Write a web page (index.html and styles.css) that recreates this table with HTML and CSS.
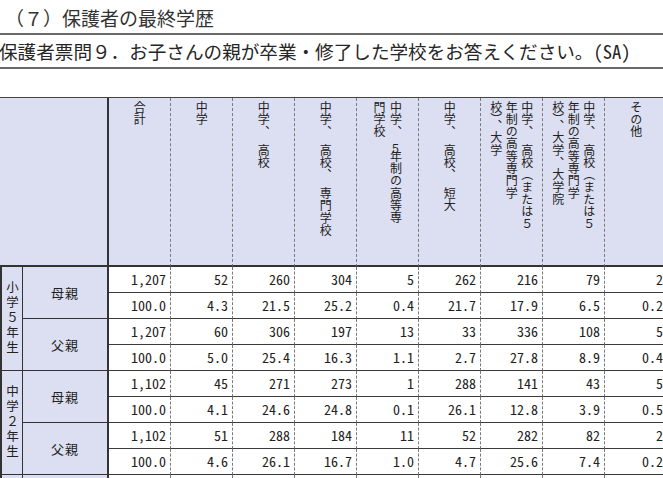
FILE: index.html
```html
<!DOCTYPE html>
<html lang="ja">
<head>
<meta charset="utf-8">
<title>保護者の最終学歴</title>
<link rel="stylesheet" href="styles.css">
</head>
<body>
<div class="title">（７）保護者の最終学歴</div>
<div class="question">保護者票問９．お子さんの親が卒業・修了した学校をお答えください。<span class="ascii">(SA)</span></div>
<div class="tbl">
  <div class="h corner"></div>
  <div class="h"><div class="vt">合計</div></div>
  <div class="h"><div class="vt">中学</div></div>
  <div class="h"><div class="vt">中学、　高校</div></div>
  <div class="h"><div class="vt">中学、　高校、　専門学校</div></div>
  <div class="h"><div class="vt">中学、　<span class="hw">５</span>年制の高等専<br>門学校</div></div>
  <div class="h"><div class="vt">中学、　高校、　短大</div></div>
  <div class="h"><div class="vt">中学、　高校（または５<br>年制の高等専門学<br>校）、大学</div></div>
  <div class="h"><div class="vt">中学、　高校（または５<br>年制の高等専門学<br>校）、大学、大学院</div></div>
  <div class="h last"><div class="vt">その他</div></div>

  <div class="grp"><div class="vg">小学５年生</div></div>
  <div class="lbl">母親</div>
  <div class="c">1,207</div><div class="c">52</div><div class="c">260</div><div class="c">304</div><div class="c">5</div><div class="c">262</div><div class="c">216</div><div class="c">79</div><div class="c last">2</div>
  <div class="c">100.0</div><div class="c">4.3</div><div class="c">21.5</div><div class="c">25.2</div><div class="c">0.4</div><div class="c">21.7</div><div class="c">17.9</div><div class="c">6.5</div><div class="c last">0.2</div>
  <div class="lbl">父親</div>
  <div class="c">1,207</div><div class="c">60</div><div class="c">306</div><div class="c">197</div><div class="c">13</div><div class="c">33</div><div class="c">336</div><div class="c">108</div><div class="c last">5</div>
  <div class="c">100.0</div><div class="c">5.0</div><div class="c">25.4</div><div class="c">16.3</div><div class="c">1.1</div><div class="c">2.7</div><div class="c">27.8</div><div class="c">8.9</div><div class="c last">0.4</div>

  <div class="grp"><div class="vg">中学２年生</div></div>
  <div class="lbl">母親</div>
  <div class="c">1,102</div><div class="c">45</div><div class="c">271</div><div class="c">273</div><div class="c">1</div><div class="c">288</div><div class="c">141</div><div class="c">43</div><div class="c last">5</div>
  <div class="c">100.0</div><div class="c">4.1</div><div class="c">24.6</div><div class="c">24.8</div><div class="c">0.1</div><div class="c">26.1</div><div class="c">12.8</div><div class="c">3.9</div><div class="c last">0.5</div>
  <div class="lbl">父親</div>
  <div class="c">1,102</div><div class="c">51</div><div class="c">288</div><div class="c">184</div><div class="c">11</div><div class="c">52</div><div class="c">282</div><div class="c">82</div><div class="c last">2</div>
  <div class="c">100.0</div><div class="c">4.6</div><div class="c">26.1</div><div class="c">16.7</div><div class="c">1.0</div><div class="c">4.7</div><div class="c">25.6</div><div class="c">7.4</div><div class="c last">0.2</div>

  <div class="grp"></div>
  <div class="lbl"></div>
  <div class="c"></div><div class="c"></div><div class="c"></div><div class="c"></div><div class="c"></div><div class="c"></div><div class="c"></div><div class="c"></div><div class="c last"></div>
</div>
</body>
</html>
```

FILE: styles.css
```css
html, body {
  margin: 0;
  padding: 0;
  overflow: hidden;
  background: #ffffff;
}

body {
  width: 663px;
  height: 478px;
  font-family: "Noto Sans CJK JP", "Noto Sans", sans-serif;
  color: #333333;
}

.title {
  margin-top: 2px;
  height: 31px;
  line-height: 31px;
  padding-left: 5px;
  font-size: 19px;
  color: #333333;
  white-space: nowrap;
}

.question {
  border-top: 2px solid #6a6a6a;
  border-bottom: 2px solid #6a6a6a;
  height: 32px;
  line-height: 32px;
  font-size: 18.6px;
  color: #262626;
  white-space: nowrap;
  text-indent: -1px;
}

.ascii {
  font-feature-settings: "hwid" 1;
}

.tbl {
  margin-top: 28px;
  border-top: 1px solid #444444;
  display: grid;
  grid-template-columns: 23px 86px repeat(9, 62px);
  grid-template-rows: 169px repeat(9, 26px);
  width: 667px;
}

.h {
  box-sizing: border-box;
  background: #dcdff1;
  border-right: 1px dashed #7a7a7a;
  border-bottom: 2px solid #333333;
  display: flex;
  justify-content: center;
  align-items: flex-start;
  padding-top: 3px;
}

.h.corner {
  grid-column: span 2;
  border-right: 2px solid #333333;
}

.h.last {
  border-right: none;
}

.vt {
  writing-mode: vertical-rl;
  font-size: 12px;
  line-height: 15.5px;
  letter-spacing: 0.3px;
  white-space: nowrap;
  color: #222222;
}

.hw {
  display: inline-block;
  height: 6px;
  overflow: visible;
  font-size: 11px;
}

.grp {
  grid-column: 1;
  grid-row: span 4;
  box-sizing: border-box;
  background: #dcdff1;
  border-left: 2px solid #333333;
  border-right: 1px solid #333333;
  border-bottom: 1px solid #333333;
  display: flex;
  justify-content: center;
  align-items: center;
}

.vg {
  writing-mode: vertical-rl;
  font-size: 12.5px;
  letter-spacing: 2.5px;
  line-height: 14px;
  white-space: nowrap;
  color: #222222;
}

.lbl {
  grid-column: 2;
  grid-row: span 2;
  box-sizing: border-box;
  background: #dcdff1;
  border-right: 2px solid #333333;
  border-bottom: 1px solid #333333;
  display: flex;
  justify-content: center;
  align-items: center;
  font-size: 13px;
  letter-spacing: 1px;
  color: #222222;
}

.c {
  box-sizing: border-box;
  background: #ffffff;
  border-right: 1px dashed #7a7a7a;
  border-bottom: 1px solid #3a3a3a;
  text-align: right;
  padding-right: 4px;
  font-size: 14px;
  line-height: 25px;
  color: #222222;
  white-space: nowrap;
  font-feature-settings: "hwid" 1;
}

.c.last {
  border-right: none;
}
```
